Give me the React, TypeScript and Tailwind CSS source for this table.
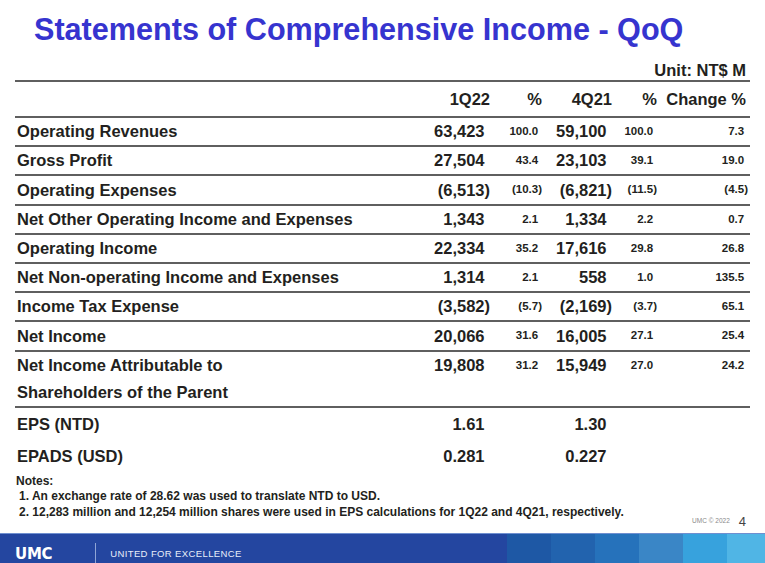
import React from "react";

type Row = {
  label: string[];
  q1?: string;
  p1?: string;
  q4?: string;
  p4?: string;
  chg?: string;
  h: string;
  line: boolean;
};

const rows: Row[] = [
  { label: ["Operating Revenues"], q1: "63,423", p1: "100.0", q4: "59,100", p4: "100.0", chg: "7.3", h: "h-[29.2px]", line: true },
  { label: ["Gross Profit"], q1: "27,504", p1: "43.4", q4: "23,103", p4: "39.1", chg: "19.0", h: "h-[29.2px]", line: true },
  { label: ["Operating Expenses"], q1: "(6,513)", p1: "(10.3)", q4: "(6,821)", p4: "(11.5)", chg: "(4.5)", h: "h-[29.2px]", line: true },
  { label: ["Net Other Operating Income and Expenses"], q1: "1,343", p1: "2.1", q4: "1,334", p4: "2.2", chg: "0.7", h: "h-[29.2px]", line: true },
  { label: ["Operating Income"], q1: "22,334", p1: "35.2", q4: "17,616", p4: "29.8", chg: "26.8", h: "h-[29.2px]", line: true },
  { label: ["Net Non-operating Income and Expenses"], q1: "1,314", p1: "2.1", q4: "558", p4: "1.0", chg: "135.5", h: "h-[29.2px]", line: true },
  { label: ["Income Tax Expense"], q1: "(3,582)", p1: "(5.7)", q4: "(2,169)", p4: "(3.7)", chg: "65.1", h: "h-[29.2px]", line: true },
  { label: ["Net Income"], q1: "20,066", p1: "31.6", q4: "16,005", p4: "27.1", chg: "25.4", h: "h-[29.2px]", line: true },
  { label: ["Net Income Attributable to", "Shareholders of the Parent"], q1: "19,808", p1: "31.2", q4: "15,949", p4: "27.0", chg: "24.2", h: "h-[56px]", line: true },
  { label: ["EPS (NTD)"], q1: "1.61", q4: "1.30", h: "h-[33px]", line: false },
  { label: ["EPADS (USD)"], q1: "0.281", q4: "0.227", h: "h-[31px]", line: false },
];

// keeps positive figures aligned with the digits of bracketed ones
function Num({ v }: { v?: string }) {
  if (!v) return null;
  const neg = v.startsWith("(");
  return (
    <span>
      {v}
      {!neg && <span className="invisible">)</span>}
    </span>
  );
}

function Cell({ v, big, multi }: { v?: string; big?: boolean; multi?: boolean }) {
  return (
    <div
      className={`flex justify-end ${multi ? "items-start leading-[27px]" : "items-center"} ${
        big ? "text-[16.5px]" : "text-[11.5px]"
      }`}
    >
      <Num v={v} />
    </div>
  );
}

export default function App() {
  return (
    <div className="w-[765px] h-[563px] bg-white flex flex-col overflow-hidden font-['Liberation_Sans',Arial,sans-serif] text-[#231f20]">
      {/* Title */}
      <h1 className="pt-[14px] pl-[34px] text-[30.6px] leading-[30px] font-bold text-[#3634cf]">
        Statements of Comprehensive Income - QoQ
      </h1>

      {/* Unit */}
      <div className="mt-[16px] h-[20px] leading-[20px] pr-[19px] text-right text-[16.5px] font-bold">
        Unit: NT$ M
      </div>

      {/* Table */}
      <div className="mx-[15px] border-t-2 border-[#5f5f5f] font-bold">
        <div className="grid grid-cols-[405px_70px_52px_70px_45px_91px] h-[36px] border-b-2 border-[#5f5f5f] text-[16.5px] items-center">
          <div />
          <div className="text-right">1Q22</div>
          <div className="text-right">%</div>
          <div className="text-right">4Q21</div>
          <div className="text-right">%</div>
          <div className="text-right pr-[2px]">Change %</div>
        </div>
        {rows.map((r) => {
          const multi = r.label.length > 1;
          return (
            <div
              key={r.label[0]}
              className={`grid grid-cols-[405px_70px_52px_70px_45px_91px] ${r.h} ${
                r.line ? "border-b-2 border-[#5f5f5f]" : ""
              }`}
            >
              <div className={`pl-[2px] text-[16.5px] flex flex-col justify-center ${multi ? "leading-[27px]" : ""}`}>
                {r.label.map((l) => (
                  <span key={l}>{l}</span>
                ))}
              </div>
              <Cell v={r.q1} big multi={multi} />
              <Cell v={r.p1} multi={multi} />
              <Cell v={r.q4} big multi={multi} />
              <Cell v={r.p4} multi={multi} />
              <Cell v={r.chg} multi={multi} />
            </div>
          );
        })}
      </div>

      {/* Notes + page number */}
      <div className="flex items-end pt-[2px] pr-[19px]">
        <div className="flex-1 pl-[16px] text-[12px] leading-[15.5px] font-bold">
          <div>Notes:</div>
          <div className="pl-[3px]">1. An exchange rate of 28.62 was used to translate NTD to USD.</div>
          <div className="pl-[3px]">2. 12,283 million and 12,254 million shares were used in EPS calculations for 1Q22 and 4Q21, respectively.</div>
        </div>
        <div className="flex items-center gap-[9px] translate-y-[11px]">
          <span className="text-[6.5px] text-[#8a8a8a]">UMC © 2022</span>
          <span className="text-[13px] text-[#444]">4</span>
        </div>
      </div>

      {/* Footer band */}
      <footer className="mt-auto h-[30px] flex bg-[#2446a0] border-t border-[#6f8fd0]">
        <div className="flex items-center flex-1 pt-[11px]">
          <span className="pl-[15px] font-['DejaVu_Sans',sans-serif] font-bold text-[15px] leading-none text-white tracking-[-0.02em]">
            UMC
          </span>
          <span className="ml-[43px] self-end h-[20px] w-px bg-[#8fa5d6]" />
          <span className="ml-[14px] text-[9.5px] leading-none tracking-[0.04em] text-[#e8eefa]">UNITED FOR EXCELLENCE</span>
        </div>
        <div className="flex">
          <div className="w-[44px] bg-[#1e58a5]" />
          <div className="w-[44px] bg-[#2263ae]" />
          <div className="w-[44px] bg-[#2672bb]" />
          <div className="w-[44px] bg-[#3a86c6]" />
          <div className="w-[44px] bg-[#37a2dd]" />
          <div className="w-[38px] bg-[#50b5e5]" />
        </div>
      </footer>
    </div>
  );
}
